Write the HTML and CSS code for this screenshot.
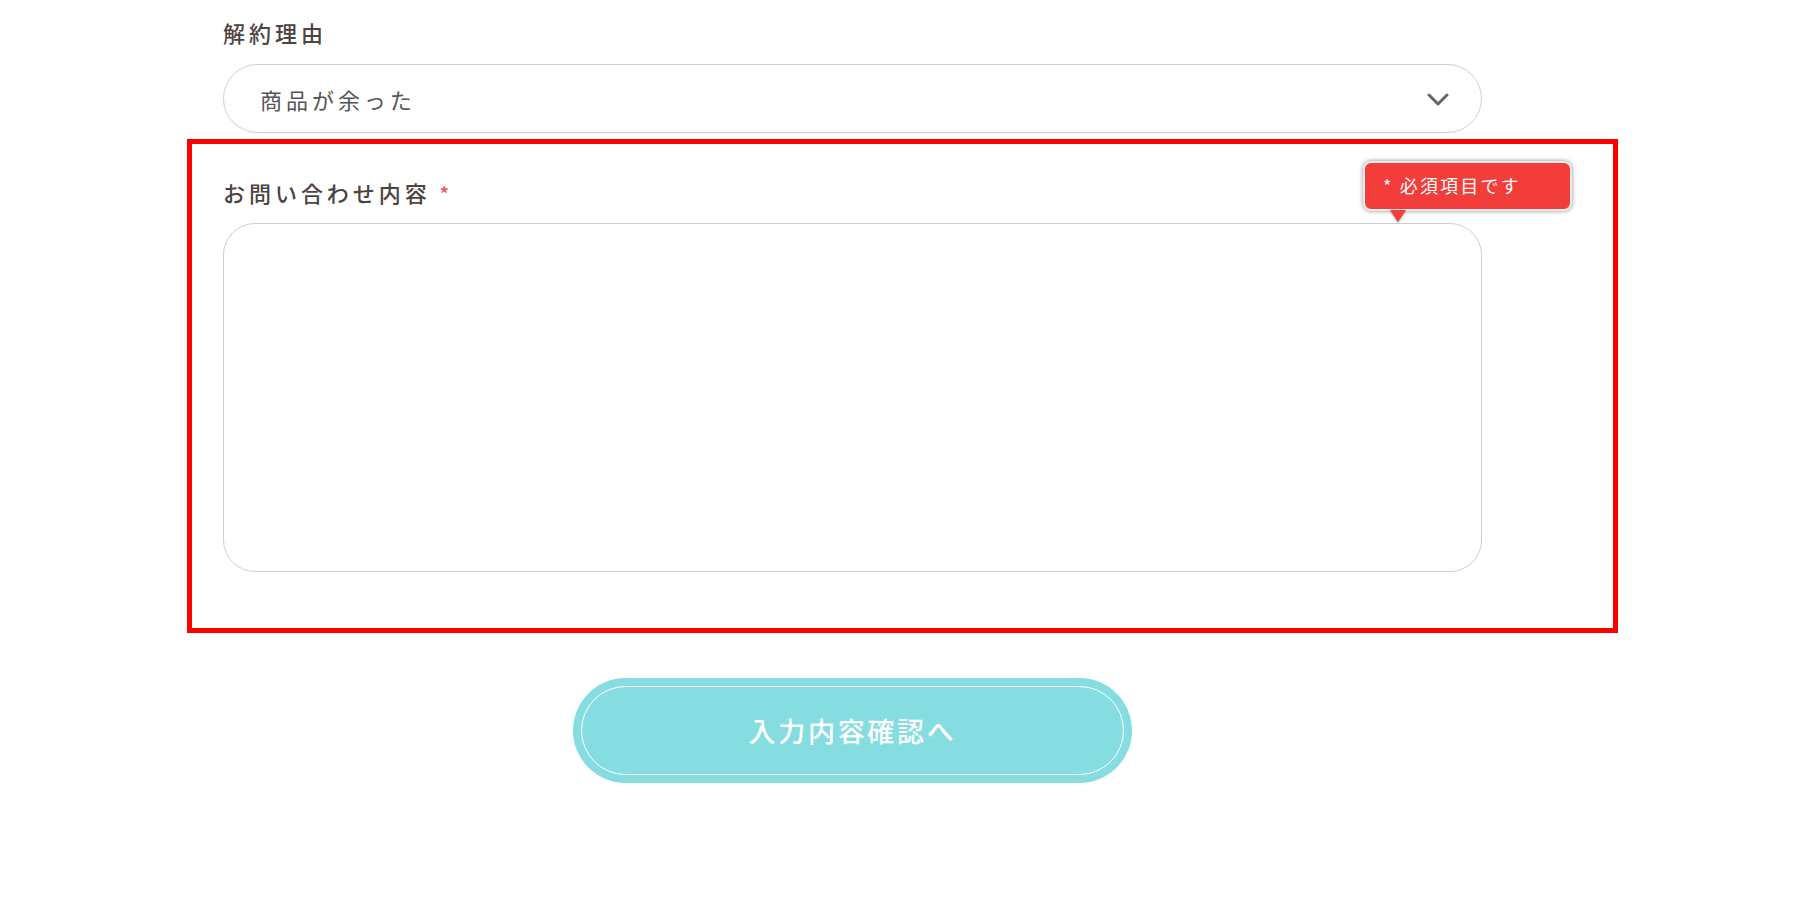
FILE: index.html
```html
<!DOCTYPE html>
<html lang="ja">
<head>
    <meta charset="UTF-8">
    <meta name="viewport" content="width=device-width, initial-scale=1.0">
    <title>解約フォーム</title>
    <link rel="stylesheet" href="styles.css">
</head>
<body>
    <main class="page">
        <form class="cancel-form">
            <div class="field">
                <label class="field-label" for="reason">解約理由</label>
                <div class="select-wrap">
                    <select id="reason" name="reason" class="select">
                        <option value="surplus">商品が余った</option>
                    </select>
                    <svg class="select-arrow" width="22" height="13" viewBox="0 0 22 13">
                        <path d="M2 2 L11 11 L20 2" fill="none" stroke="#666" stroke-width="3" stroke-linecap="round" stroke-linejoin="round"/>
                    </svg>
                </div>
            </div>

            <div class="field field-error">
                <label class="field-label" for="message">お問い合わせ内容 <span class="required">*</span></label>
                <div class="tooltip">* 必須項目です</div>
                <textarea id="message" name="message" class="textarea"></textarea>
            </div>

            <button type="submit" class="submit-btn"><span class="submit-inner">入力内容確認へ</span></button>
        </form>
    </main>
</body>
</html>
```

FILE: styles.css
```css
body {
    margin: 0;
    padding: 0;
    background: #fff;
    font-family: 'Noto Sans CJK JP', 'Noto Sans', sans-serif;
    color: #4a403d;
}

.page {
    width: 1431px;
    margin-left: 187px;
    padding-top: 16px;
}

.field {
    width: 1259px;
    padding-left: 36px;
}

.field-label {
    display: block;
    font-size: 22px;
    line-height: 33px;
    letter-spacing: 0.18em;
    font-weight: 500;
    color: #4d4341;
}

.required {
    color: #ea5a66;
    font-size: 20px;
    letter-spacing: 0;
}

.select-wrap {
    position: relative;
    margin-top: 15px;
}

.select {
    display: block;
    width: 100%;
    height: 69px;
    padding: 0 36px;
    border: 1px solid #cfcfcf;
    border-radius: 35px;
    background: #fff;
    appearance: none;
    -webkit-appearance: none;
    font-family: inherit;
    font-size: 22px;
    letter-spacing: 0.18em;
    color: #555;
    box-sizing: border-box;
}

.select-arrow {
    position: absolute;
    right: 33px;
    top: 29px;
    pointer-events: none;
}

.field-error {
    position: relative;
    width: 1259px;
    margin-top: 6px;
    padding: 32px 131px 56px 31px;
    border: 5px solid #ff0000;
}

.textarea {
    display: block;
    width: 100%;
    height: 349px;
    margin-top: 13px;
    border: 1px solid #cfcfcf;
    border-radius: 32px;
    background: #fff;
    resize: none;
    box-sizing: border-box;
}

.tooltip {
    position: absolute;
    left: 1171px;
    top: 17px;
    width: 209px;
    height: 50px;
    box-sizing: border-box;
    padding-left: 18px;
    background: #f23d3b;
    border: 2px solid #ececec;
    border-radius: 8px;
    box-shadow: 0 0 4px rgba(0, 0, 0, 0.45);
    color: #fff;
    font-size: 18px;
    line-height: 44px;
    letter-spacing: 0.12em;
}

.tooltip::after {
    content: '';
    position: absolute;
    left: 25px;
    bottom: -13px;
    width: 0;
    height: 0;
    border-left: 8px solid transparent;
    border-right: 8px solid transparent;
    border-top: 12px solid #f23d3b;
    filter: drop-shadow(0 1px 1px rgba(0, 0, 0, 0.35));
}

.submit-btn {
    display: block;
    width: 559px;
    height: 105px;
    margin: 45px 0 0 386px;
    padding: 8px;
    border: none;
    border-radius: 53px;
    background: #86dde1;
    cursor: pointer;
    box-sizing: border-box;
}

.submit-inner {
    display: flex;
    align-items: center;
    justify-content: center;
    height: 100%;
    border: 1.5px solid #fff;
    border-radius: 45px;
    box-sizing: border-box;
    font-family: 'Noto Sans CJK JP', sans-serif;
    font-size: 27px;
    font-weight: 500;
    letter-spacing: 0.1em;
    color: #fff;
}
```
